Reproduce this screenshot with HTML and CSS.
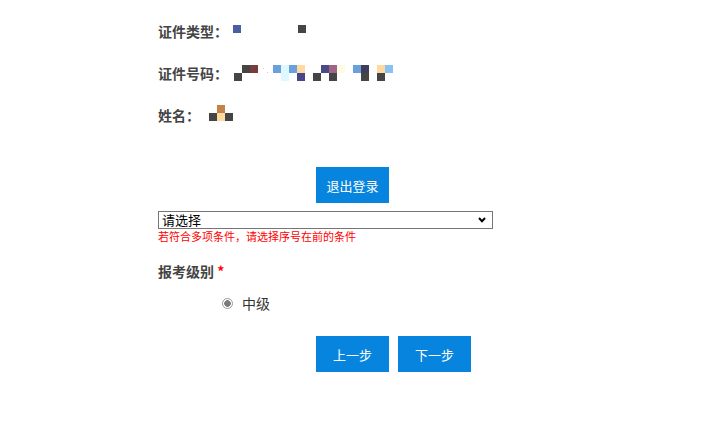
FILE: index.html
```html
<!DOCTYPE html>
<html lang="zh-CN">
<head>
<meta charset="utf-8">
<title>报考</title>
<link rel="stylesheet" href="styles.css">
</head>
<body>
<div class="page">
  <div class="info">
    <div class="info-row">
      <span class="info-label">证件类型：</span>
      <svg class="mosaic" width="80" height="16" viewBox="0 0 80 16">
        <rect x="0" y="2" width="8" height="8" fill="#4a5fa0"/>
        <rect x="65" y="2" width="8" height="8" fill="#454545"/>
      </svg>
    </div>
    <div class="info-row">
      <span class="info-label">证件号码：</span>
      <svg class="mosaic" width="162" height="16" viewBox="0 0 162 16">
        <rect x="9" y="0" width="8" height="8" fill="#454545"/>
        <rect x="17" y="0" width="8" height="8" fill="#7a3d3d"/>
        <rect x="30" y="3" width="1" height="1" fill="#cfcfcf"/>
        <rect x="34" y="7" width="1" height="1" fill="#cfcfcf"/>
        <rect x="40" y="0" width="8" height="8" fill="#6aa0dc"/>
        <rect x="48" y="0" width="8" height="16" fill="#def8ff"/>
        <rect x="56" y="0" width="8" height="8" fill="#6aa0dc"/>
        <rect x="64" y="0" width="8" height="8" fill="#ffd9a0"/>
        <rect x="88" y="0" width="8" height="8" fill="#4a4a88"/>
        <rect x="96" y="0" width="8" height="8" fill="#a06486"/>
        <rect x="104" y="0" width="8" height="8" fill="#fffbe2"/>
        <rect x="120" y="0" width="8" height="8" fill="#6aa0dc"/>
        <rect x="128" y="0" width="8" height="8" fill="#3e3e5c"/>
        <rect x="144" y="0" width="8" height="8" fill="#ffd9a0"/>
        <rect x="152" y="0" width="8" height="8" fill="#88c2f2"/>
        <rect x="1" y="8" width="8" height="8" fill="#454545"/>
        <rect x="64" y="8" width="8" height="8" fill="#4a4488"/>
        <rect x="80" y="8" width="8" height="8" fill="#454545"/>
        <rect x="96" y="8" width="8" height="8" fill="#454545"/>
        <rect x="128" y="8" width="8" height="8" fill="#454545"/>
        <rect x="144" y="8" width="8" height="8" fill="#454545"/>
      </svg>
    </div>
    <div class="info-row">
      <span class="info-label">姓名：</span>
      <svg class="mosaic mosaic-name" width="30" height="20" viewBox="0 0 30 20">
        <rect x="12" y="0" width="8" height="8" fill="#c2824a"/>
        <rect x="4" y="8" width="8" height="8" fill="#454545"/>
        <rect x="12" y="8" width="8" height="8" fill="#ffd9a0"/>
        <rect x="20" y="8" width="8" height="8" fill="#454545"/>
      </svg>
    </div>
  </div>

  <div class="logout-wrap">
    <button class="btn" type="button">退出登录</button>
  </div>

  <div class="form">
    <div class="select-wrap">
      <select class="cond-select">
        <option>请选择</option>
      </select>
      <svg class="chevron" width="8" height="6" viewBox="0 0 8 6">
        <polyline points="1,1 4,4.2 7,1" fill="none" stroke="#000" stroke-width="2"/>
      </svg>
    </div>
    <div class="hint">若符合多项条件，请选择序号在前的条件</div>

    <div class="field-label">报考级别 <span class="req">*</span></div>

    <label class="radio-row">
      <span class="radio"></span>
      <span class="radio-text">中级</span>
    </label>

    <div class="actions">
      <button class="btn" type="button">上一步</button>
      <button class="btn" type="button">下一步</button>
    </div>
  </div>
</div>
</body>
</html>
```

FILE: styles.css
```css
* {
  box-sizing: border-box;
}

html, body {
  margin: 0;
  padding: 0;
  background: #ffffff;
}

body {
  font-family: "Noto Sans CJK SC", "Noto Sans", "Liberation Sans", sans-serif;
  color: #444444;
  width: 705px;
  height: 430px;
  overflow: hidden;
}

.page {
  width: 705px;
}

.info {
  padding-top: 10px;
  padding-left: 158px;
}

.info-row {
  display: flex;
  align-items: center;
  height: 42px;
}

.info-label {
  font-size: 14px;
  font-weight: bold;
  color: #444444;
  line-height: 20px;
  width: 70px;
  white-space: nowrap;
}

.info-row .mosaic {
  display: block;
  margin-left: 5px;
}

.info-row .mosaic-name {
  margin-left: -23px;
}

.logout-wrap {
  display: flex;
  justify-content: center;
  margin-top: 31px;
}

.btn {
  width: 73px;
  height: 36px;
  border: none;
  background: #0785de;
  color: #ffffff;
  font-family: "Noto Sans CJK SC", "Noto Sans", sans-serif;
  font-size: 13px;
  padding: 0;
  margin: 0;
  cursor: pointer;
}

.form {
  padding-left: 158px;
}

.select-wrap {
  position: relative;
  width: 335px;
  margin-top: 8px;
}

.cond-select {
  display: block;
  -webkit-appearance: none;
  appearance: none;
  width: 335px;
  height: 18px;
  border: 1px solid #767676;
  border-radius: 0;
  background: #ffffff;
  color: #000000;
  font-family: "Noto Sans CJK SC", sans-serif;
  font-size: 13px;
  line-height: 16px;
  padding: 0 0 0 3px;
  outline: none;
}

.chevron {
  position: absolute;
  right: 7px;
  top: 6px;
  pointer-events: none;
}

.hint {
  color: #ff0000;
  font-size: 11px;
  line-height: 14px;
  margin-top: 0;
}

.field-label {
  margin-top: 18px;
  font-size: 14px;
  font-weight: bold;
  line-height: 20px;
  color: #444444;
}

.req {
  color: #ff0000;
  font-weight: bold;
}

.radio-row {
  display: flex;
  align-items: center;
  margin-top: 12px;
  padding-left: 64px;
  height: 20px;
}

.radio {
  width: 11px;
  height: 11px;
  border-radius: 50%;
  border: 1px solid #9a9a9a;
  background: radial-gradient(circle, #7a7a7a 0, #7a7a7a 3px, #ffffff 3.6px);
  margin-top: 1px;
}

.radio-text {
  margin-left: 9px;
  font-size: 14px;
  color: #333333;
  line-height: 20px;
}

.actions {
  display: flex;
  gap: 9px;
  margin-top: 23px;
  margin-left: 158px;
}
```
